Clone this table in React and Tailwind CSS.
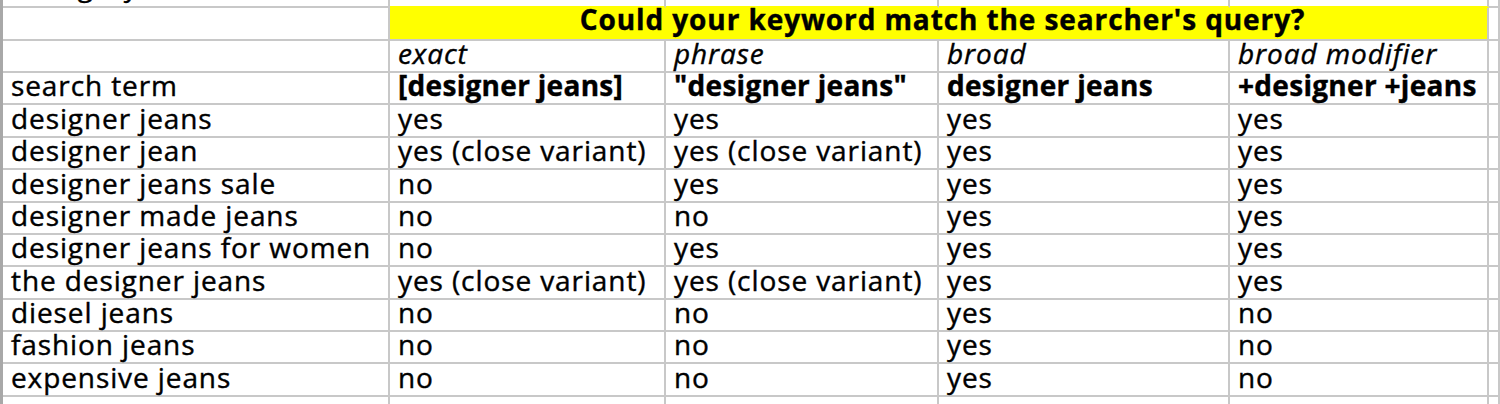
import React from "react";

const ROWS = [
  ["designer jeans", "yes", "yes", "yes", "yes"],
  ["designer jean", "yes (close variant)", "yes (close variant)", "yes", "yes"],
  ["designer jeans sale", "no", "yes", "yes", "yes"],
  ["designer made jeans", "no", "no", "yes", "yes"],
  ["designer jeans for women", "no", "yes", "yes", "yes"],
  ["the designer jeans", "yes (close variant)", "yes (close variant)", "yes", "yes"],
  ["diesel jeans", "no", "no", "yes", "no"],
  ["fashion jeans", "no", "no", "yes", "no"],
  ["expensive jeans", "no", "no", "yes", "no"],
];

function Cell({ children, className = "" }) {
  return (
    <div
      className={
        "flex min-w-0 items-end whitespace-nowrap border-r-2 border-b-2 border-[#c8c8c8] pl-[8px] pb-[6px] leading-[24px] " +
        className
      }
    >
      {children}
    </div>
  );
}

export default function App() {
  return (
    <div
      className="h-[404px] w-[1500px] overflow-hidden bg-white text-[28px] tracking-[0.9px] text-black [-webkit-text-stroke:0.4px_#000]"
      style={{ fontFamily: '"Open Sans", "Liberation Sans", sans-serif' }}
    >
      <div className="grid grid-cols-[387px_276px_273px_291px_259px_1fr] grid-rows-[8px_33px_32px_32px_33px_32px_33px_32px_32px_33px_32px_32px_33px_20px] border-l-[3px] border-[#a8a8a8]">
        {/* partially visible top row */}
        <Cell className="items-start overflow-hidden pb-0">
          <span className="-mt-[27px] block pl-[4px]">Category</span>
        </Cell>
        <Cell className="border-b-[#ffff00]" />
        <Cell className="border-b-[#ffff00]" />
        <Cell className="border-b-[#ffff00]" />
        <Cell className="border-b-[#ffff00]" />
        <Cell className="border-r-0" />

        {/* title band */}
        <Cell />
        <Cell className="col-span-4 justify-center bg-[#ffff00] pb-[8px] pl-0 font-bold">
          Could your keyword match the searcher's query?
        </Cell>
        <Cell className="border-r-0" />

        {/* match type names */}
        <Cell />
        <Cell className="italic">exact</Cell>
        <Cell className="italic">phrase</Cell>
        <Cell className="italic">broad</Cell>
        <Cell className="italic">broad modifier</Cell>
        <Cell className="border-r-0" />

        {/* keyword syntax */}
        <Cell>search term</Cell>
        <Cell className="font-bold tracking-[0.3px]">[designer jeans]</Cell>
        <Cell className="font-bold tracking-[0.3px]">"designer jeans"</Cell>
        <Cell className="font-bold tracking-[0.3px]">designer jeans</Cell>
        <Cell className="font-bold tracking-[0.3px]">+designer +jeans</Cell>
        <Cell className="border-r-0" />

        {ROWS.map((row) => (
          <React.Fragment key={row[0]}>
            {row.map((v, i) => (
              <Cell key={i}>{v}</Cell>
            ))}
            <Cell className="border-r-0" />
          </React.Fragment>
        ))}

        {/* partial last row */}
        <Cell className="border-b-0" />
        <Cell className="border-b-0" />
        <Cell className="border-b-0" />
        <Cell className="border-b-0" />
        <Cell className="border-b-0" />
        <Cell className="border-b-0 border-r-0" />
      </div>
    </div>
  );
}
